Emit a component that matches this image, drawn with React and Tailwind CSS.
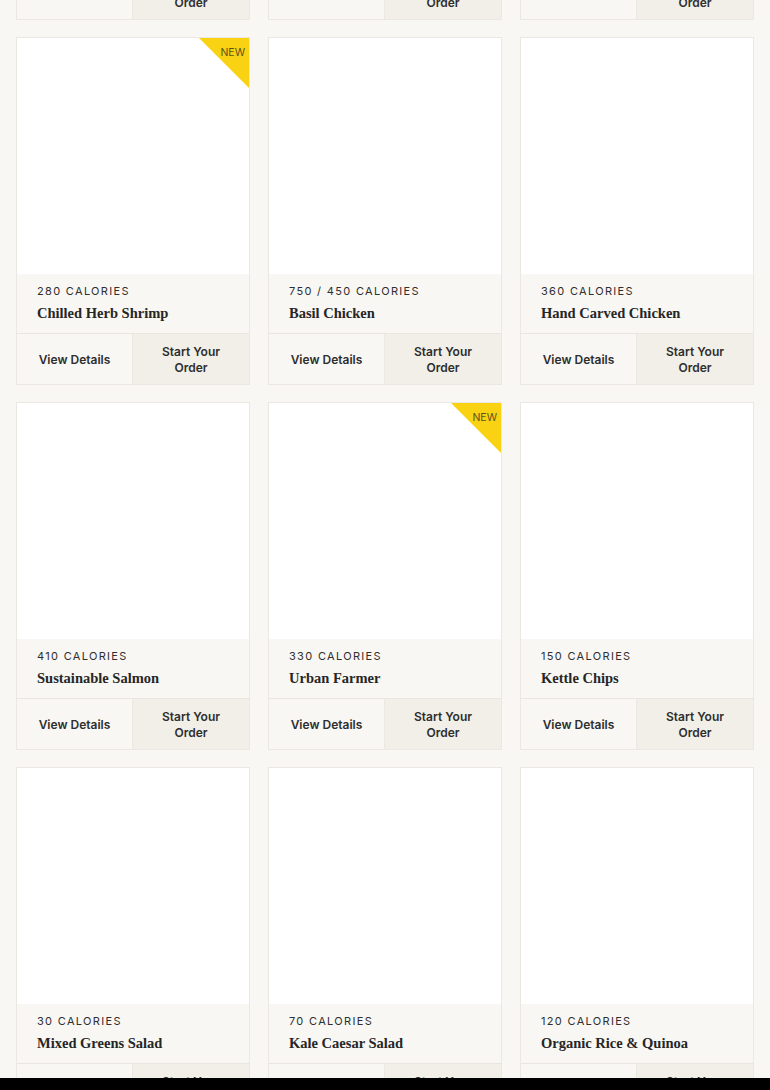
import React from 'react'

const items = [
    { cal: '250 CALORIES', name: 'Roasted Sweet Potatoes' },
    { cal: '190 CALORIES', name: 'Spicy Broccoli' },
    { cal: '220 CALORIES', name: 'Roasted Tofu' },
    { cal: '280 CALORIES', name: 'Chilled Herb Shrimp', isNew: true },
    { cal: '750 / 450 CALORIES', name: 'Basil Chicken' },
    { cal: '360 CALORIES', name: 'Hand Carved Chicken' },
    { cal: '410 CALORIES', name: 'Sustainable Salmon' },
    { cal: '330 CALORIES', name: 'Urban Farmer', isNew: true },
    { cal: '150 CALORIES', name: 'Kettle Chips' },
    { cal: '30 CALORIES', name: 'Mixed Greens Salad' },
    { cal: '70 CALORIES', name: 'Kale Caesar Salad' },
    { cal: '120 CALORIES', name: 'Organic Rice & Quinoa' },
]

const NewBadge = () => (
    <div className="absolute top-0 right-0 w-[50px] h-[50px]">
        <svg width="50" height="50" viewBox="0 0 50 50" className="absolute inset-0">
            <polygon points="0,0 50,0 50,50" fill="#f9d313" />
        </svg>
        <span className="absolute top-[10px] right-[4px] text-[10.5px] leading-none text-[#5e5218] font-['Inter',sans-serif]">
            NEW
        </span>
    </div>
)

const MenuCard = ({ item }) => (
    <div className="flex flex-col h-[348px] border border-[#ebe8e2] bg-white">
        {/* картинка */}
        <div className="relative h-[236px] bg-white">
            {item.isNew && <NewBadge />}
        </div>

        {/* инфо */}
        <div className="h-[59px] bg-[#f8f7f3] px-5 pt-[10px]">
            <div className="text-[11px] leading-[14px] tracking-[0.12em] text-[#2f2f2f] font-['Inter',sans-serif]">
                {item.cal}
            </div>
            <div className="mt-[6px] text-[14.5px] leading-[18px] font-bold text-[#262626] font-['Liberation_Serif','DejaVu_Serif',serif]">
                {item.name}
            </div>
        </div>

        {/* кнопки */}
        <div className="flex-1 grid grid-cols-2 border-t border-[#e9e6e0] font-['Inter',sans-serif] text-[12px] font-semibold text-[#2e2e2e]">
            <div className="flex items-center justify-center pt-[1px] bg-[#f8f7f3] border-r border-[#ebe8e2]">
                View Details
            </div>
            <div className="flex items-center justify-center pt-[1px] bg-[#f2efe9] text-center leading-[16px]">
                Start Your<br />Order
            </div>
        </div>
    </div>
)

const App = () => {
    return (
        <div className="min-h-screen bg-[#f8f7f3] overflow-hidden">
            <div className="mt-[-328px] px-4 grid grid-cols-3 gap-x-[18px] gap-y-[17px]">
                {items.map((item, i) => (
                    <MenuCard key={i} item={item} />
                ))}
            </div>
            <div className="fixed bottom-0 left-0 right-0 h-[12px] bg-black"></div>
        </div>
    )
}

export default App
